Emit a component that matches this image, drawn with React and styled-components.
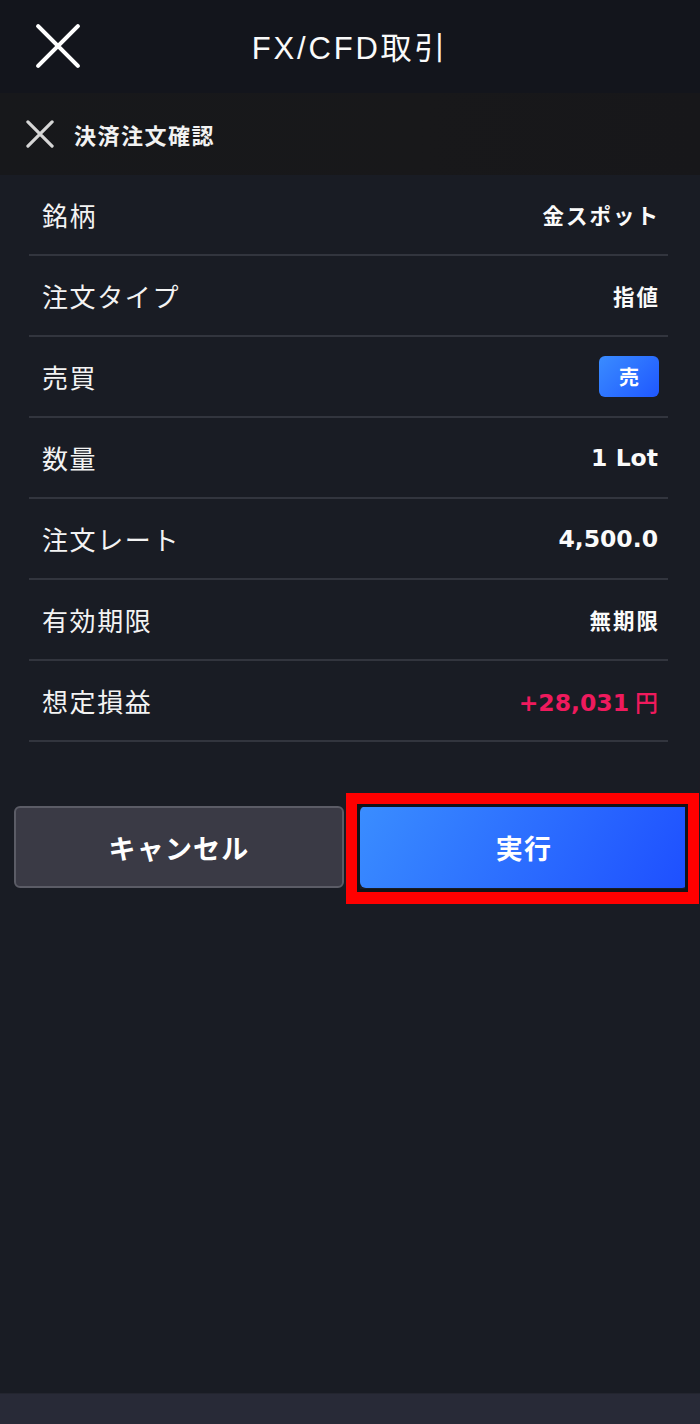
import styled, { createGlobalStyle } from 'styled-components';

const GlobalStyle = createGlobalStyle`
  html, body {
    margin: 0;
    padding: 0;
    background: #191c24;
  }
  body {
    font-family: "Noto Sans CJK JP", "Noto Sans", Roboto, sans-serif;
    color: #fff;
  }
`;

const Page = styled.div`
  width: 700px;
  height: 1424px;
  display: flex;
  flex-direction: column;
  background: #191c24;
  overflow: hidden;
`;

const Header = styled.header`
  height: 93px;
  flex-shrink: 0;
  background: #13151c;
  display: grid;
  grid-template-columns: 100px 1fr 100px;
  align-items: center;
`;

const CloseButton = styled.div`
  display: flex;
  padding-left: 35px;
  padding-bottom: 1px;
`;

const Title = styled.h1`
  margin: 0;
  text-align: center;
  font-family: "Liberation Sans", "Noto Sans CJK JP", sans-serif;
  font-size: 31px;
  font-weight: 400;
  letter-spacing: 2.8px;
  color: #fafafa;
  padding-bottom: 2px;
`;

const SubHeader = styled.div`
  height: 82px;
  flex-shrink: 0;
  background: linear-gradient(90deg, #17181b, #18181a 60%, #17171a);
  display: flex;
  align-items: center;
  gap: 20px;
  padding-left: 26px;
`;

const SubTitle = styled.span`
  font-size: 22px;
  font-weight: 700;
  letter-spacing: 1.5px;
  color: #f2f2f2;
  padding-bottom: 1px;
`;

const List = styled.div`
  padding: 0 32px 0 29px;
  display: flex;
  flex-direction: column;
`;

const Row = styled.div`
  height: 79px;
  display: flex;
  align-items: center;
  justify-content: space-between;
  border-bottom: 2px solid #32353e;
  padding: 0 10px 0 13px;
`;

const Label = styled.span`
  font-size: 26px;
  font-weight: 400;
  letter-spacing: 1.6px;
  color: #f3f3f3;
`;

const Value = styled.span`
  font-size: ${(p) => (p.$num ? '23.5px' : '21.5px')};
  font-weight: 700;
  letter-spacing: ${(p) => (p.$num ? '0' : '2px')};
  font-family: ${(p) => (p.$num ? '"DejaVu Sans", "Noto Sans CJK JP", sans-serif' : '"Noto Sans CJK JP", sans-serif')};
  color: ${(p) => p.$color || '#fafafa'};
  margin-right: ${(p) => (p.$num ? '0' : '-2px')};
  display: flex;
  align-items: baseline;
`;

const Yen = styled.span`
  font-family: "Noto Sans CJK JP", sans-serif;
  font-weight: 500;
  font-size: 23px;
  margin-left: 6px;
`;

const SideBadge = styled.span`
  width: 60px;
  height: 41px;
  border-radius: 6px;
  background: linear-gradient(135deg, #3a8cff, #1f57ff);
  display: flex;
  align-items: center;
  justify-content: center;
  font-size: 20px;
  font-weight: 700;
  color: #fff;
  margin-right: -1px;
`;

const Actions = styled.div`
  display: grid;
  grid-template-columns: 330px 328px;
  gap: 16px;
  padding: 0 12px 0 14px;
  margin-top: 64px;
`;

const Button = styled.button`
  width: 100%;
  height: 82px;
  border-radius: 6px;
  font-family: "Noto Sans CJK JP", sans-serif;
  font-size: 27px;
  font-weight: 700;
  letter-spacing: 1.2px;
  color: #fff;
  cursor: pointer;
  border: ${(p) => (p.$primary ? 'none' : '2px solid #5b5c66')};
  background: ${(p) => (p.$primary ? 'linear-gradient(120deg, #3a8dff, #1e4fff)' : '#3a3a45')};
`;

const Highlight = styled.div`
  position: relative;
  display: flex;

  &::after {
    content: '';
    position: absolute;
    top: -13px;
    left: -14px;
    right: -11px;
    bottom: -16px;
    border: 11px solid #ff0000;
    border-bottom-width: 12px;
    box-shadow: inset 0 0 0 3px #111318;
    pointer-events: none;
  }
`;

const Spacer = styled.div`
  flex: 1;
`;

const BottomBar = styled.div`
  height: 30px;
  flex-shrink: 0;
  background: #282a37;
  border-top: 1px solid #23252f;
`;

const CloseIcon = ({ size, stroke, color }) => (
  <svg width={size} height={size} viewBox="0 0 44 44" fill="none">
    <path d="M3 3 L41 41 M41 3 L3 41" stroke={color} strokeWidth={stroke} strokeLinecap="round" />
  </svg>
);

const rows = [
  { label: '銘柄', value: '金スポット' },
  { label: '注文タイプ', value: '指値' },
  { label: '売買', badge: '売' },
  { label: '数量', value: '1 Lot', num: true },
  { label: '注文レート', value: '4,500.0', num: true },
  { label: '有効期限', value: '無期限' },
  { label: '想定損益', value: '+28,031', num: true, color: '#ef1a5d', yen: true },
];

export default function App() {
  return (
    <Page>
      <GlobalStyle />
      <Header>
        <CloseButton>
          <CloseIcon size={46} stroke={4} color="#fff" />
        </CloseButton>
        <Title>FX/CFD取引</Title>
        <div />
      </Header>
      <SubHeader>
        <CloseIcon size={28} stroke={5} color="#d6d6d6" />
        <SubTitle>決済注文確認</SubTitle>
      </SubHeader>
      <List>
        {rows.map((r) => (
          <Row key={r.label}>
            <Label>{r.label}</Label>
            {r.badge ? (
              <SideBadge>{r.badge}</SideBadge>
            ) : (
              <Value $num={r.num} $color={r.color}>
                {r.value}
                {r.yen && <Yen>円</Yen>}
              </Value>
            )}
          </Row>
        ))}
      </List>
      <Actions>
        <Button>キャンセル</Button>
        <Highlight>
          <Button $primary>実行</Button>
        </Highlight>
      </Actions>
      <Spacer />
      <BottomBar />
    </Page>
  );
}
